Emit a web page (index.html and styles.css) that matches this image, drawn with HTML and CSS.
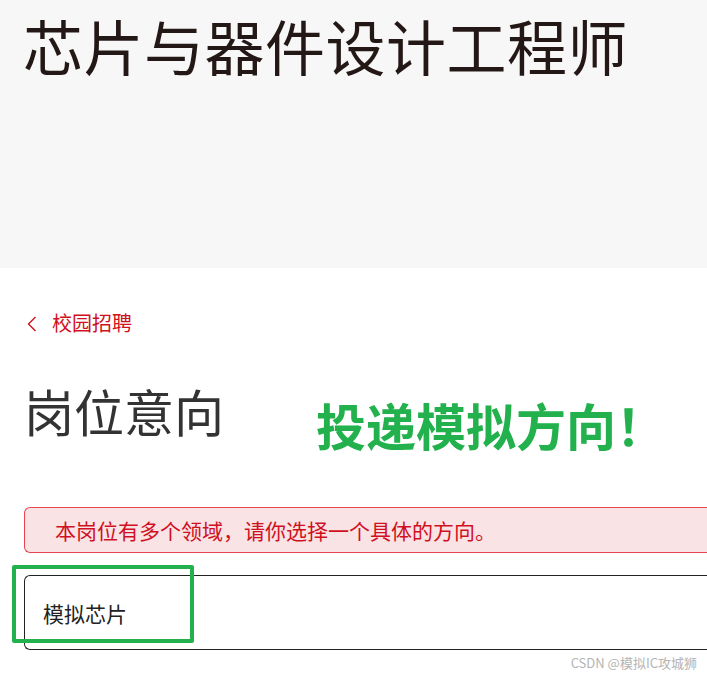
FILE: index.html
```html
<!DOCTYPE html>
<html lang="zh-CN">
<head>
    <meta charset="UTF-8">
    <meta name="viewport" content="width=device-width, initial-scale=1.0">
    <title>芯片与器件设计工程师</title>
    <link rel="stylesheet" href="styles.css">
</head>
<body>
    <header class="job-header">
        <h1>芯片与器件设计工程师</h1>
    </header>

    <main class="content">
        <a class="back-link" href="#">
            <svg class="back-icon" width="10" height="16" viewBox="0 0 10 16">
                <path d="M8.5 1 L1.5 8 L8.5 15" fill="none" stroke="#d0101e" stroke-width="1.4"/>
            </svg>
            <span>校园招聘</span>
        </a>

        <div class="title-row">
            <h2>岗位意向</h2>
            <span class="note">投递模拟方向！</span>
        </div>

        <div class="alert">本岗位有多个领域，请你选择一个具体的方向。</div>

        <div class="option-wrap">
            <div class="option">模拟芯片</div>
            <div class="mark"></div>
        </div>
    </main>

    <div class="watermark">CSDN @模拟IC攻城狮</div>
</body>
</html>
```

FILE: styles.css
```css
body {
    margin: 0;
    font-family: "Noto Sans CJK SC", "Noto Sans", sans-serif;
    background-color: #fff;
    color: #333;
    position: relative;
    min-height: 676px;
}
.job-header {
    height: 268px;
    box-sizing: border-box;
    padding: 15px 0 0 23px;
    background-color: #f7f7f7; /* franja gris superior */
}
.job-header h1 {
    margin: 0;
    font-size: 60px;
    line-height: 60px;
    font-weight: 400;
    letter-spacing: 0.5px;
    color: #231815;
    white-space: nowrap;
}
.content {
    padding-left: 24px;
}
.back-link {
    display: flex;
    align-items: center;
    margin-top: 45px;
    height: 20px;
    color: #d0101e;
    text-decoration: none;
    font-size: 20px;
    line-height: 20px;
}
.back-icon {
    margin: 2px 0 0 3px;
}
.back-link span {
    margin-left: 15px;
}
.title-row {
    display: flex;
    align-items: flex-start;
    margin-top: 52px;
}
.title-row h2 {
    margin: 0;
    font-size: 50px;
    line-height: 50px;
    font-weight: 400;
    color: #333;
    white-space: nowrap;
}
.note {
    margin: 14px 0 0 92px;
    font-size: 50px;
    line-height: 50px;
    font-weight: 700;
    color: #22b14c;
    white-space: nowrap;
}
/* las cajas siguen más allá del borde derecho, sin lado derecho visible */
.alert {
    height: 46px;
    box-sizing: border-box;
    margin-top: 58px;
    padding-left: 30px;
    border: 1px solid #e84552;
    border-right: none;
    border-radius: 6px 0 0 6px;
    background-color: #f9e3e5;
    color: #d0101e;
    font-size: 21px;
    line-height: 44px;
    white-space: nowrap;
}
.option-wrap {
    position: relative;
    margin-top: 22px;
}
.option {
    height: 75px;
    box-sizing: border-box;
    padding-left: 18px;
    border: 1px solid #222;
    border-right: none;
    border-radius: 6px 0 0 6px;
    color: #222;
    font-size: 21px;
    line-height: 75px;
}
/* recuadro verde encima de la opción */
.mark {
    position: absolute;
    left: -12px;
    top: -10px;
    width: 182px;
    height: 78px;
    box-sizing: border-box;
    border: 4px solid #22b14c;
    border-radius: 2px;
}
.watermark {
    position: absolute;
    right: 10px;
    top: 655px;
    font-size: 13px;
    line-height: 16px;
    color: #b4b4b4;
    white-space: nowrap;
}
```
